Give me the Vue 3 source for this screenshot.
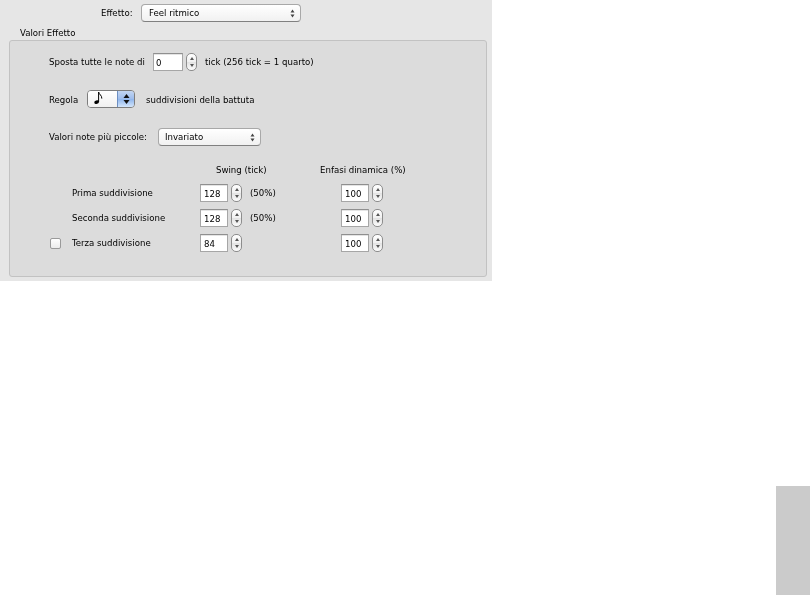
<script setup>
const rows = [
  { label: 'Prima suddivisione', swing: '128', pct: '(50%)', check: false },
  { label: 'Seconda suddivisione', swing: '128', pct: '(50%)', check: false },
  { label: 'Terza suddivisione', swing: '84', pct: '', check: true }
]
</script>

<template>
  <div class="page">
    <section class="panel">
      <div class="effect-row">
        <span class="effect-label">Effetto:</span>
        <div class="popup effect-popup">
          <span>Feel ritmico</span>
          <svg class="updown" width="5" height="9" viewBox="0 0 5 9"><path d="M2.5 0.5 4.5 3.5H.5zM2.5 8.5 .5 5.5h4z" fill="#444" /></svg>
        </div>
      </div>
      <div class="group-title">Valori Effetto</div>
      <div class="group">
        <div class="line line-shift">
          <span class="shift-label">Sposta tutte le note di</span>
          <div class="field field-shift">0</div>
          <div class="stepper"><i class="up"></i><i class="down"></i></div>
          <span class="shift-note">tick (256 tick = 1 quarto)</span>
        </div>
        <div class="line line-adjust">
          <span class="adjust-label">Regola</span>
          <div class="note-popup">
            <div class="note-face">
              <svg width="14" height="16" viewBox="0 0 14 16">
                <ellipse cx="3.6" cy="11.2" rx="2.4" ry="1.7" fill="#000" transform="rotate(-20 3.6 11.2)" />
                <path d="M5.6 11V1c.5 2.6 3.4 3.2 3.2 6.6" fill="none" stroke="#000" stroke-width="1" />
              </svg>
            </div>
            <div class="note-arrows">
              <svg width="7" height="12" viewBox="0 0 7 12"><path d="M3.5 1 6.5 5H.5zM3.5 11 .5 7h6z" fill="#111" /></svg>
            </div>
          </div>
          <span class="adjust-note">suddivisioni della battuta</span>
        </div>
        <div class="line line-small">
          <span class="small-label">Valori note più piccole:</span>
          <div class="popup small-popup">
            <span>Invariato</span>
            <svg class="updown" width="5" height="9" viewBox="0 0 5 9"><path d="M2.5 0.5 4.5 3.5H.5zM2.5 8.5 .5 5.5h4z" fill="#444" /></svg>
          </div>
        </div>
        <div class="table-head">
          <span class="head head-swing">Swing (tick)</span>
          <span class="head head-enf">Enfasi dinamica (%)</span>
        </div>
        <div v-for="r in rows" :key="r.label" class="table-row">
          <div class="check-cell"><span v-if="r.check" class="checkbox"></span></div>
          <span class="row-label">{{ r.label }}</span>
          <div class="field">{{ r.swing }}</div>
          <div class="stepper"><i class="up"></i><i class="down"></i></div>
          <span class="pct">{{ r.pct }}</span>
          <div class="field">100</div>
          <div class="stepper"><i class="up"></i><i class="down"></i></div>
        </div>
      </div>
    </section>
    <div class="side-tab"></div>
  </div>
</template>

<style>
html, body { margin: 0; background: #fff; }
</style>

<style scoped>
.page {
  position: relative;
  width: 810px;
  height: 595px;
  overflow: hidden;
  background: #fff;
  font-family: "DejaVu Sans", sans-serif;
  font-size: 8.6px;
  color: #000;
}
.panel {
  box-sizing: border-box;
  width: 492px;
  height: 281px;
  padding: 4px 5px 4px 9px;
  background: #e6e6e6;
  filter: blur(0.3px);
}
.effect-row {
  display: flex;
  align-items: center;
  height: 18px;
  padding-left: 92px;
}
.effect-label { width: 40px; }
.popup {
  box-sizing: border-box;
  display: flex;
  align-items: center;
  justify-content: space-between;
  height: 18px;
  padding: 0 5px 0 7px;
  background: linear-gradient(#fff, #f1f1f1);
  border: 1px solid #a8a8a8;
  border-bottom-color: #808080;
  border-radius: 4px;
}
.effect-popup { width: 160px; }
.group-title {
  height: 14px;
  margin-top: 4px;
  padding-left: 11px;
  line-height: 15px;
}
.group {
  box-sizing: border-box;
  height: 237px;
  padding: 12px 0 0 39px;
  background: #dcdcdc;
  border: 1px solid #c2c2c2;
  border-radius: 3px;
}
.line { display: flex; align-items: center; height: 18px; }
.line-adjust { margin-top: 19px; }
.line-small { margin-top: 20px; }
.shift-label { width: 104px; }
.shift-note { margin-left: 8px; }
.field {
  box-sizing: border-box;
  width: 28px;
  height: 18px;
  padding-left: 3px;
  line-height: 18px;
  background: #fff;
  border: 1px solid #a6a6a6;
  border-top-color: #8f8f8f;
  box-shadow: inset 0 1px 0 #e4e4e4;
}
.field-shift { width: 30px; padding-left: 2px; }
.stepper {
  box-sizing: border-box;
  position: relative;
  flex: none;
  width: 11px;
  height: 18px;
  margin-left: 3px;
  background: linear-gradient(#fff, #f0f0f0 50%, #e2e2e2 50%, #fbfbfb);
  border: 1px solid #8d8d8d;
  border-radius: 5px;
}
.stepper i {
  position: absolute;
  left: 2.5px;
  border-left: 2px solid transparent;
  border-right: 2px solid transparent;
}
.stepper .up { top: 3px; border-bottom: 3px solid #555; }
.stepper .down { bottom: 3px; border-top: 3px solid #555; }
.adjust-label { width: 38px; margin-top: 2px; }
.note-popup {
  box-sizing: border-box;
  display: flex;
  width: 48px;
  height: 18px;
  border: 1px solid #7d7d7d;
  border-radius: 4px;
  overflow: hidden;
}
.note-face {
  flex: 1;
  display: flex;
  align-items: center;
  padding-left: 5px;
  background: linear-gradient(#fff, #f0f0f0);
}
.note-arrows {
  display: flex;
  align-items: center;
  justify-content: center;
  width: 16px;
  background: linear-gradient(#c3d6f2, #9dbcec 50%, #8db4ec 50%, #d4e6fb);
  border-left: 1px solid #6d8fc2;
}
.adjust-note { margin-left: 11px; margin-top: 2px; }
.small-label { width: 109px; }
.small-popup { width: 103px; padding-left: 6px; }
.table-head {
  display: flex;
  align-items: center;
  height: 14px;
  margin-top: 17px;
}
.head { white-space: nowrap; }
.head-swing { margin-left: 167px; width: 104px; }
.table-row {
  display: grid;
  grid-template-columns: 23px 128px 28px 14px 99px 28px 14px;
  align-items: center;
  height: 18px;
  margin-top: 7px;
}
.check-cell { display: flex; }
.pct { margin-left: 8px; white-space: nowrap; }
.checkbox {
  box-sizing: border-box;
  display: block;
  width: 11px;
  height: 11px;
  margin-left: 1px;
  background: linear-gradient(#fff, #ececec);
  border: 1px solid #9a9a9a;
  border-radius: 2px;
}
.side-tab {
  position: absolute;
  left: 776px;
  top: 486px;
  width: 34px;
  height: 109px;
  background: #cbcbcb;
}
</style>
